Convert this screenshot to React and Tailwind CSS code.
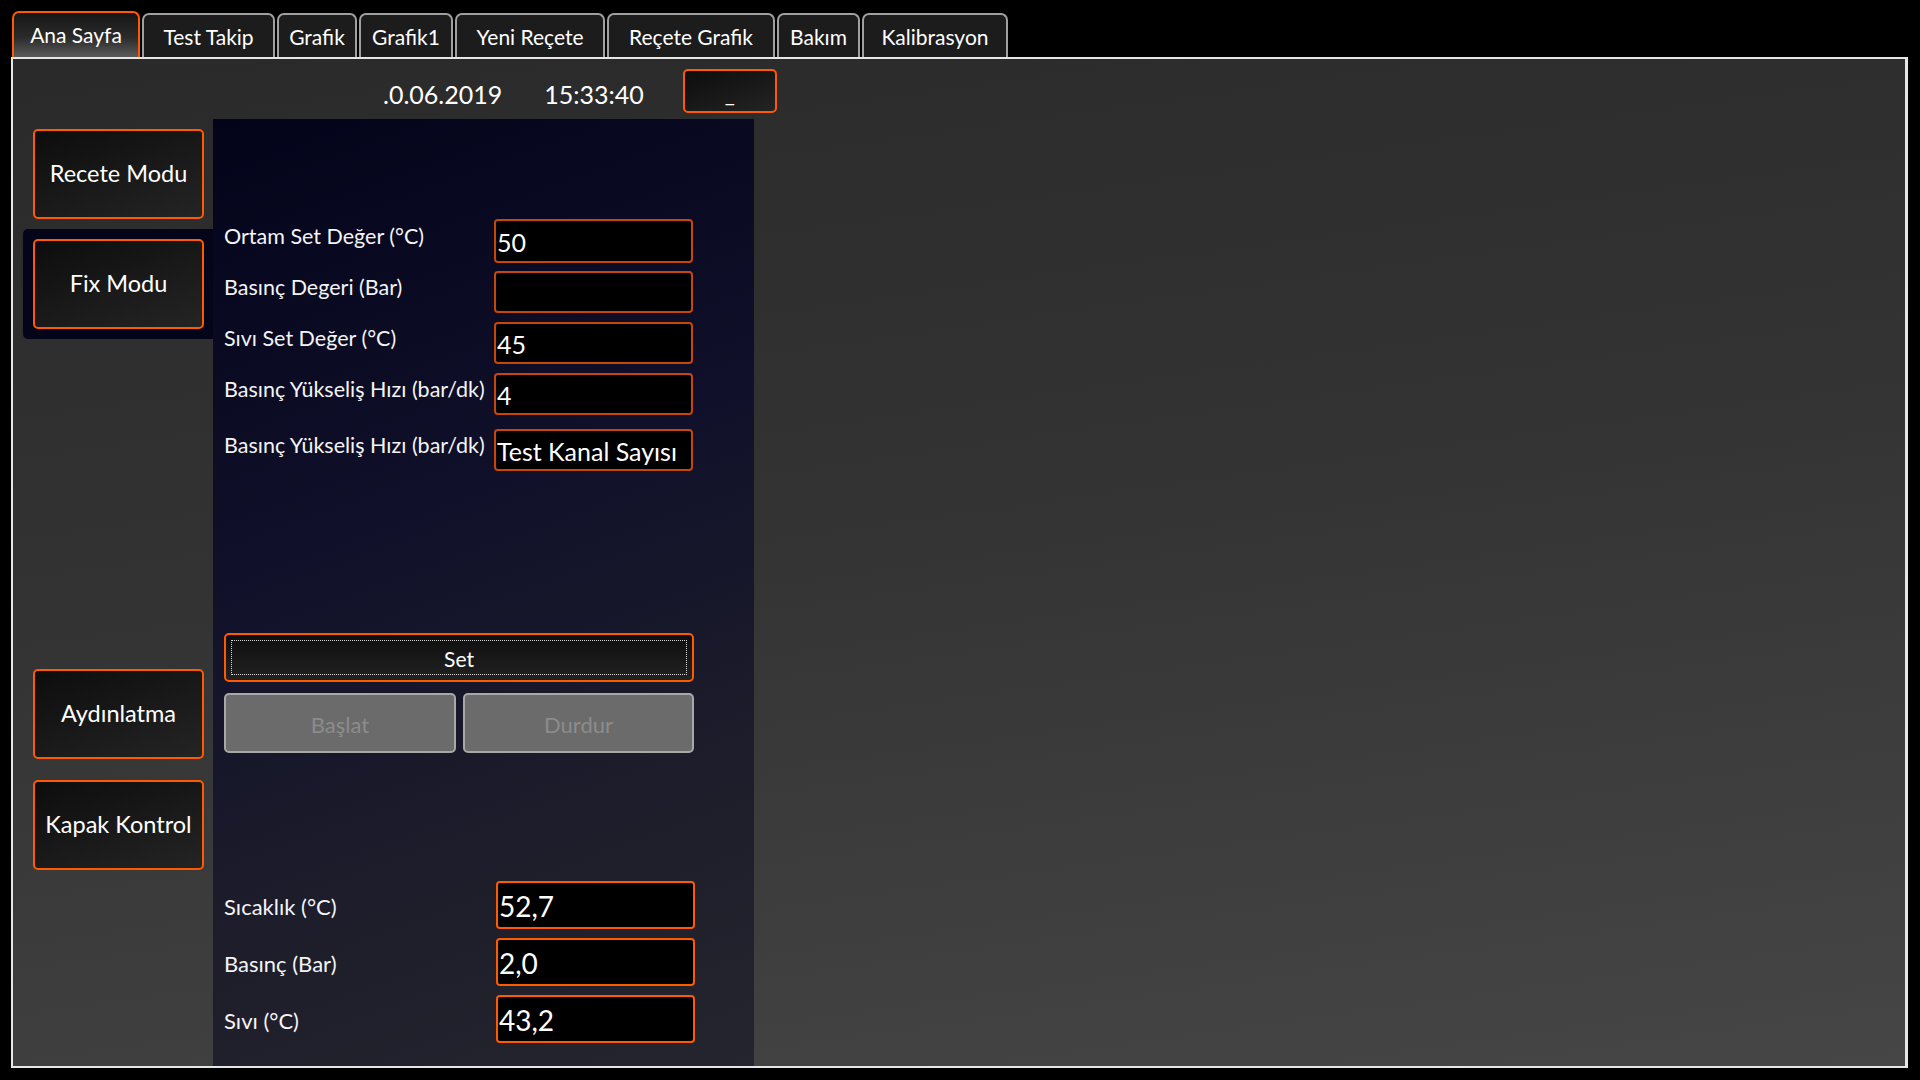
import React from "react";

const FONT = { fontFamily: "Lato, 'Open Sans', sans-serif" };

function Tab({ label, w, active }) {
  if (active) {
    return (
      <div
        className={`${w} h-[46px] shrink-0 border-2 border-b-0 border-[#ff5a00] rounded-t-[7px] bg-[linear-gradient(180deg,#161616_0%,#2a2a2a_55%,#5a5a5a_100%)] flex items-center justify-center text-[21px] text-white`}
      >
        {label}
      </div>
    );
  }
  return (
    <div
      className={`${w} h-[44px] shrink-0 border-2 border-b-0 border-[#a0a0a0] rounded-t-[7px] bg-[#1c1c1c] flex items-center justify-center text-[21px] text-white pt-[1px]`}
    >
      {label}
    </div>
  );
}

function SideButton({ label }) {
  return (
    <div className="w-[171px] h-[90px] rounded-[5px] border-2 border-[#ff5a00] bg-[linear-gradient(160deg,#0d0d0d,#242424)] flex items-center justify-center text-[23.5px] text-white">
      {label}
    </div>
  );
}

function FormRow({ label, value, mt }) {
  return (
    <div className={`flex items-start ${mt}`}>
      <div className="w-[270px] shrink-0 text-[21.5px] leading-[28px] pt-[2px] text-[#f4f4f4] whitespace-nowrap">
        {label}
      </div>
      <div className="w-[199px] h-[42px] rounded-[4px] border-2 border-[#c8460a] bg-black flex items-center pl-[1px] pt-[3px] text-[25px] text-white whitespace-nowrap overflow-hidden">
        {value}
      </div>
    </div>
  );
}

function ReadRow({ label, value, mt }) {
  return (
    <div className={`flex items-center ${mt}`}>
      <div className="w-[272px] shrink-0 text-[22px] leading-[28px] pt-[4px] text-[#f4f4f4] whitespace-nowrap">
        {label}
      </div>
      <div className="w-[199px] h-[48px] rounded-[4px] border-2 border-[#ff5a00] bg-black flex items-center pl-[1px] pt-[2px] text-[28px] text-white">
        {value}
      </div>
    </div>
  );
}

export default function App() {
  return (
    <div className="w-[1920px] h-[1080px] bg-black flex flex-col overflow-hidden" style={FONT}>
      {/* Tabs */}
      <div className="h-[57px] pl-[12px] flex items-end gap-[2px]">
        <Tab label="Ana Sayfa" w="w-[128px]" active />
        <Tab label="Test Takip" w="w-[133px]" />
        <Tab label="Grafik" w="w-[80px]" />
        <Tab label="Grafik1" w="w-[94px]" />
        <Tab label="Yeni Reçete" w="w-[150px]" />
        <Tab label="Reçete Grafik" w="w-[168px]" />
        <Tab label="Bakım" w="w-[83px]" />
        <Tab label="Kalibrasyon" w="w-[146px]" />
      </div>

      {/* Content */}
      <div className="ml-[11px] w-[1897px] h-[1011px] border-2 border-r-[3px] border-[#e6e6e6] bg-[linear-gradient(172deg,#2a2a2a_0%,#333333_45%,#464646_100%)] flex flex-col">
        {/* Header */}
        <div className="h-[60px] shrink-0 flex items-start pl-[370px]">
          <div className="mt-[20px] text-[25px] leading-[30px] text-white">.0.06.2019</div>
          <div className="ml-[42px] mt-[20px] text-[25px] leading-[30px] text-white">15:33:40</div>
          <div className="ml-[39px] mt-[10px] w-[94px] h-[44px] rounded-[5px] border-2 border-[#ff5a00] bg-[linear-gradient(160deg,#0d0d0d,#232323)] flex items-center justify-center text-[22px] text-white pt-[4px]">
            _
          </div>
        </div>

        {/* Body */}
        <div className="flex flex-1">
          {/* Left column */}
          <div className="w-[200px] shrink-0 flex flex-col">
            <div className="ml-[20px] mt-[10px]">
              <SideButton label="Recete Modu" />
            </div>
            <div className="ml-[10px] mt-[10px] w-[190px] h-[110px] rounded-l-[5px] bg-[#05051a] pl-[10px] pt-[10px]">
              <SideButton label="Fix Modu" />
            </div>
            <div className="ml-[20px] mt-[330px]">
              <SideButton label="Aydınlatma" />
            </div>
            <div className="ml-[20px] mt-[21px]">
              <SideButton label="Kapak Kontrol" />
            </div>
          </div>

          {/* Center panel */}
          <div className="w-[541px] shrink-0 bg-[linear-gradient(160deg,#03031a_0%,#10102a_40%,#1e1e2b_75%,#25252f_100%)] pl-[11px] pt-[100px] flex flex-col">
            <div className="flex items-start">
              <div className="w-[270px] shrink-0 text-[21.5px] leading-[28px] pt-[3px] text-[#f4f4f4] whitespace-nowrap">
                Ortam Set Değer (°C)
              </div>
              <div className="w-[199px] h-[44px] rounded-[4px] border-2 border-[#c8460a] bg-black flex items-center pl-[1px] pt-[3px] text-[25px] text-white">
                50
              </div>
            </div>
            <FormRow label="Basınç Degeri (Bar)" value="" mt="mt-[8px]" />
            <FormRow label="Sıvı Set Değer (°C)" value="45" mt="mt-[9px]" />
            <FormRow label="Basınç Yükseliş Hızı (bar/dk)" value="4" mt="mt-[9px]" />
            <FormRow label="Basınç Yükseliş Hızı (bar/dk)" value="Test Kanal Sayısı" mt="mt-[14px]" />

            {/* Set button */}
            <div className="mt-[162px] w-[470px] h-[49px] rounded-[5px] border-2 border-[#ff5a00] bg-[linear-gradient(180deg,#0e0e0e,#222222)] p-[5px]">
              <div className="w-full h-full border border-dotted border-[#d8d8d8] flex items-center justify-center text-[21px] text-white pt-[2px]">
                Set
              </div>
            </div>
            <div className="mt-[11px] flex gap-[7px]">
              <div className="w-[232px] h-[60px] rounded-[5px] border-2 border-[#a8a8a8] bg-[#6b6b6b] flex items-center justify-center text-[22px] text-[#8c8c8c] pt-[3px]">
                Başlat
              </div>
              <div className="w-[231px] h-[60px] rounded-[5px] border-2 border-[#a8a8a8] bg-[#6b6b6b] flex items-center justify-center text-[22px] text-[#8c8c8c] pt-[3px]">
                Durdur
              </div>
            </div>

            {/* Readouts */}
            <ReadRow label="Sıcaklık (°C)" value="52,7" mt="mt-[128px]" />
            <ReadRow label="Basınç (Bar)" value="2,0" mt="mt-[9px]" />
            <ReadRow label="Sıvı (°C)" value="43,2" mt="mt-[9px]" />
          </div>

          <div className="flex-1" />
        </div>
      </div>
    </div>
  );
}
